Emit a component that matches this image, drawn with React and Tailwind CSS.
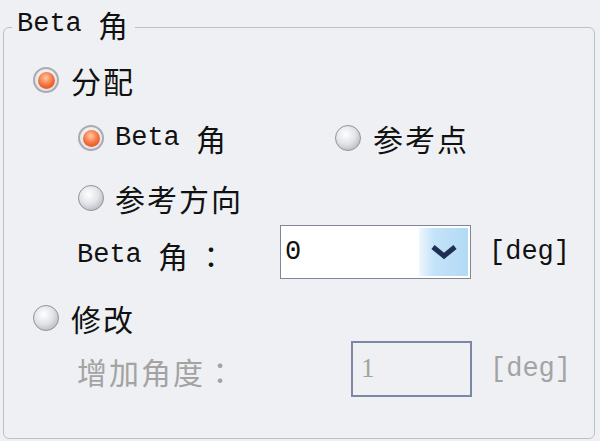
const mono = "font-['Liberation_Mono',monospace] text-[27px] leading-none whitespace-pre";
const cjk = "font-['Noto_Sans_CJK_SC',sans-serif] text-[30px] tracking-[2px] leading-none";
const colon = "font-['Noto_Sans_CJK_TC',sans-serif] text-[30px] leading-none";

function Radio({ checked }) {
    if (checked) {
        return (
            <span className="flex h-[26px] w-[26px] shrink-0 items-center justify-center rounded-full border-2 border-[#a9abb2] bg-[radial-gradient(circle_at_50%_40%,#ffffff,#d6d8de)]">
                <span className="h-[17px] w-[17px] rounded-full bg-[radial-gradient(circle_at_45%_35%,#ffc8a4,#f36b36_55%,#d6461c)]" />
            </span>
        );
    }
    return (
        <span className="h-[26px] w-[26px] shrink-0 rounded-full border border-[#8f939b] bg-[radial-gradient(circle_at_40%_35%,#ffffff,#e3e4e8_45%,#a3a6ae)]" />
    );
}

function App() {
    return (
        <div className="h-[441px] w-[600px] bg-[#eef0f4] pl-[3px] pr-[5px] pt-[27px] text-[#111]">
            <div className="relative flex h-[412px] flex-col rounded-[6px] border border-[#bcc1c9]">
                {/* group title */}
                <span className="absolute left-[8px] top-[-19px] flex h-[30px] items-center bg-[#eef0f4] px-[5px]">
                    <span className={mono}>Beta </span>
                    <span className={cjk}>角</span>
                </span>

                {/* 分配 */}
                <div className="mt-[34px] flex h-[36px] items-center gap-[12px] pl-[29px]">
                    <Radio checked />
                    <span className={cjk}>分配</span>
                </div>

                <div className="mt-[22px] flex h-[36px] items-center pl-[74px]">
                    <div className="flex w-[257px] items-center gap-[11px]">
                        <Radio checked />
                        <span className="flex items-center">
                            <span className={mono}>Beta </span>
                            <span className={cjk}>角</span>
                        </span>
                    </div>
                    <div className="flex items-center gap-[12px]">
                        <Radio />
                        <span className={cjk}>参考点</span>
                    </div>
                </div>

                <div className="mt-[24px] flex h-[36px] items-center gap-[11px] pl-[74px]">
                    <Radio />
                    <span className={cjk}>参考方向</span>
                </div>

                <div className="mt-[9px] flex h-[54px] items-center pl-[73px]">
                    <span className="flex w-[203px] items-center pt-[6px]">
                        <span className={mono}>Beta </span>
                        <span className={cjk}>角</span>
                        <span className={colon + " ml-[6px]"}>：</span>
                    </span>
                    <div className="flex h-[54px] w-[191px] items-stretch border border-[#7f8796] bg-white p-[2px]">
                        <span className={mono + " flex flex-1 items-center pl-[2px]"}>0</span>
                        <span className="flex w-[49px] items-center justify-center bg-[linear-gradient(90deg,#eef7fd,#c4e3f8_30%,#b2daf5)]">
                            <svg width="28" height="16" viewBox="0 0 28 16">
                                <path d="M3 3 L14 12 L25 3" fill="none" stroke="#1d2f52" strokeWidth="5" strokeLinejoin="miter" />
                            </svg>
                        </span>
                    </div>
                    <span className={mono + " ml-[18px]"}>[deg]</span>
                </div>

                <div className="mt-[21px] flex h-[36px] items-center gap-[12px] pl-[29px]">
                    <Radio />
                    <span className={cjk}>修改</span>
                </div>

                <div className="mt-[5px] flex h-[56px] items-center pl-[73px] text-[#a3a3a3]">
                    <span className="flex w-[274px] items-center pt-[4px]">
                        <span className={cjk}>增加角度</span>
                        <span className={colon}>：</span>
                    </span>
                    <div className="flex h-[56px] w-[121px] items-start border-2 border-[#7c86a5] pl-[8px] pt-[12px]">
                        <span className="font-['Liberation_Serif',serif] text-[27px] leading-none">1</span>
                    </div>
                    <span className={mono + " ml-[18px]"}>[deg]</span>
                </div>
            </div>
        </div>
    );
}

export default App;
